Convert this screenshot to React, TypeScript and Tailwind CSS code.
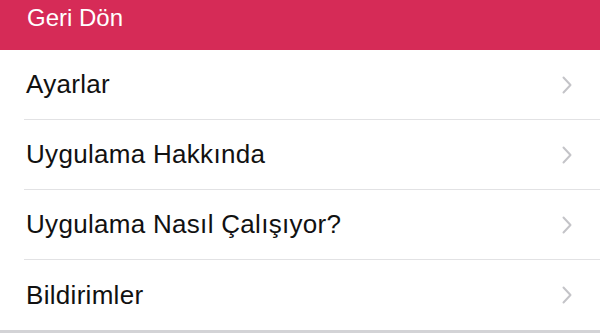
const items = ["Ayarlar", "Uygulama Hakkında", "Uygulama Nasıl Çalışıyor?", "Bildirimler"];

function Chevron() {
  return (
    <svg width="10" height="18" viewBox="0 0 10 18" fill="none" className="shrink-0">
      <path d="M1.5 1.5 L8.5 9 L1.5 16.5" stroke="#c4c4c8" strokeWidth="2" strokeLinecap="round" strokeLinejoin="round" />
    </svg>
  );
}

export default function App() {
  return (
    <div className="w-[600px] h-[333px] overflow-hidden bg-white" style={{ fontFamily: '"Liberation Sans", Arial, sans-serif' }}>
      <div className="h-[50px] bg-[#d62b57] pl-[27px] pt-[3px]">
        <span className="text-[24px] leading-[30px] text-white">Geri Dön</span>
      </div>
      <ul>
        {items.map((item, i) => (
          <li key={item} className="pl-[24px]">
            <div className={`flex h-[70px] items-center justify-between pr-[28px] ${i < items.length - 1 ? "border-b border-[#e2e2e4]" : ""}`}>
              <span className="pl-[2px] text-[26px] tracking-[0.3px] text-[#111]">{item}</span>
              <Chevron />
            </div>
          </li>
        ))}
      </ul>
      <div className="h-[3px] bg-[#d3d3d6]" />
    </div>
  );
}
